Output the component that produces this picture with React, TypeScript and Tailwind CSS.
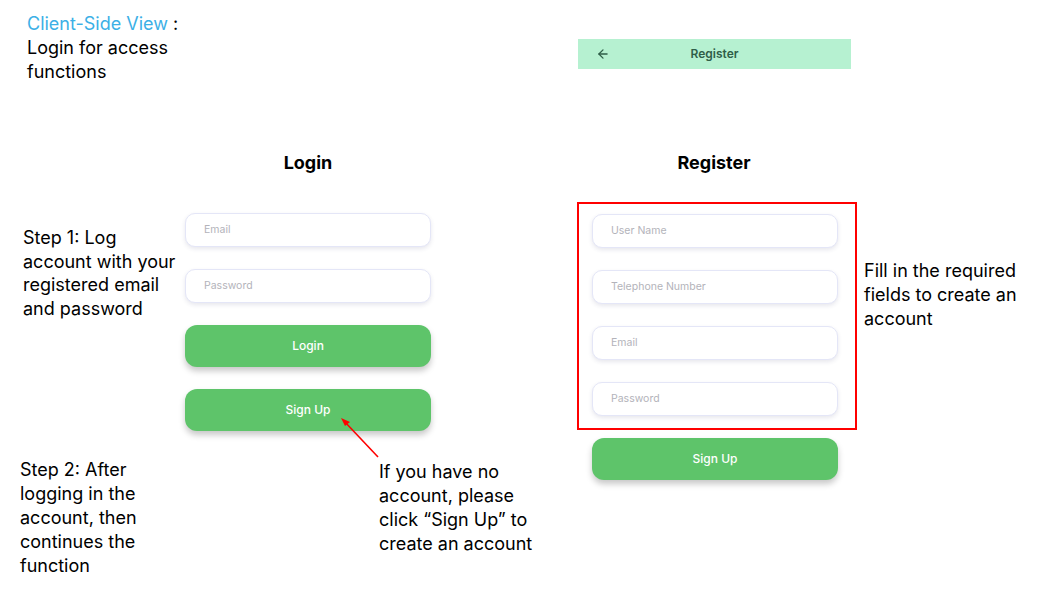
import { ArrowLeft } from "lucide-react";

const slideFont = { fontFamily: "Inter, 'Open Sans', sans-serif" };

function Field({ label }: { label: string }) {
  return (
    <div className="flex h-[34px] items-center rounded-[10px] border border-[#e4e6f7] bg-white pl-[18px] text-[10.5px] text-[#b3b3ba] shadow-[0_2px_4px_rgba(60,60,110,0.12)]">
      {label}
    </div>
  );
}

function GreenButton({ label }: { label: string }) {
  return (
    <div className="flex h-[42px] items-center justify-center rounded-[12px] bg-[#5ec46a] text-[12px] font-medium text-white shadow-[0_4px_6px_rgba(0,0,0,0.22)]">
      {label}
    </div>
  );
}

export default function App() {
  return (
    <div className="relative h-[592px] w-[1051px] overflow-hidden bg-white text-black" style={slideFont}>
      {/* slide text boxes */}
      <div className="absolute left-[27px] top-[12px] text-[18px] leading-[24px]">
        <div>
          <span className="text-[#3cb0e6]">Client-Side View</span> :
        </div>
        <div>Login for access</div>
        <div>functions</div>
      </div>

      <div className="absolute left-[23px] top-[226px] w-[160px] text-[18px] leading-[23.7px]">
        Step 1: Log account with your registered email and password
      </div>

      <div className="absolute left-[20px] top-[458px] w-[140px] text-[18px] leading-[24px]">
        Step 2: After logging in the account, then continues the function
      </div>

      <div className="absolute left-[379px] top-[460px] w-[170px] text-[18px] leading-[24px]">
        If you have no account, please click “Sign Up” to create an account
      </div>

      <div className="absolute left-[864px] top-[259px] w-[170px] text-[18px] leading-[24px]">
        Fill in the required fields to create an account
      </div>

      {/* login mockup */}
      <div className="absolute left-[185px] top-[150px] flex w-[246px] flex-col">
        <div className="text-center text-[18px] font-bold leading-[26px]">Login</div>
        <div className="mt-[37px] flex flex-col gap-[22px]">
          <Field label="Email" />
          <Field label="Password" />
        </div>
        <div className="mt-[22px] flex flex-col gap-[22px]">
          <GreenButton label="Login" />
          <GreenButton label="Sign Up" />
        </div>
      </div>

      {/* register mockup */}
      <div className="absolute left-[578px] top-[39px] flex h-[30px] w-[273px] items-center bg-[#b6f1d1] px-[18px] text-[#2f5e48]">
        <ArrowLeft size={14} strokeWidth={2.2} />
        <div className="flex-1 pr-[14px] text-center text-[12px] font-semibold">Register</div>
      </div>

      <div className="absolute left-[577px] top-[150px] flex w-[280px] flex-col">
        <div className="pr-[6px] text-center text-[18px] font-bold leading-[26px]">Register</div>
        <div className="mt-[26px] w-full border-2 border-[#ff0000] px-[13px] pb-[12px] pt-[10px]">
          <div className="flex flex-col gap-[22px] pr-[4px]">
            <Field label="User Name" />
            <Field label="Telephone Number" />
            <Field label="Email" />
            <Field label="Password" />
          </div>
        </div>
        <div className="ml-[15px] mt-[8px] w-[246px]">
          <GreenButton label="Sign Up" />
        </div>
      </div>

      {/* annotation arrow */}
      <svg className="absolute left-[335px] top-[412px]" width="50" height="50" viewBox="0 0 50 50">
        <line x1="43" y1="45" x2="9" y2="9" stroke="#ff0000" strokeWidth="1.6" />
        <polygon points="6,6 15,10 10,14" fill="#ff0000" />
      </svg>
    </div>
  );
}
